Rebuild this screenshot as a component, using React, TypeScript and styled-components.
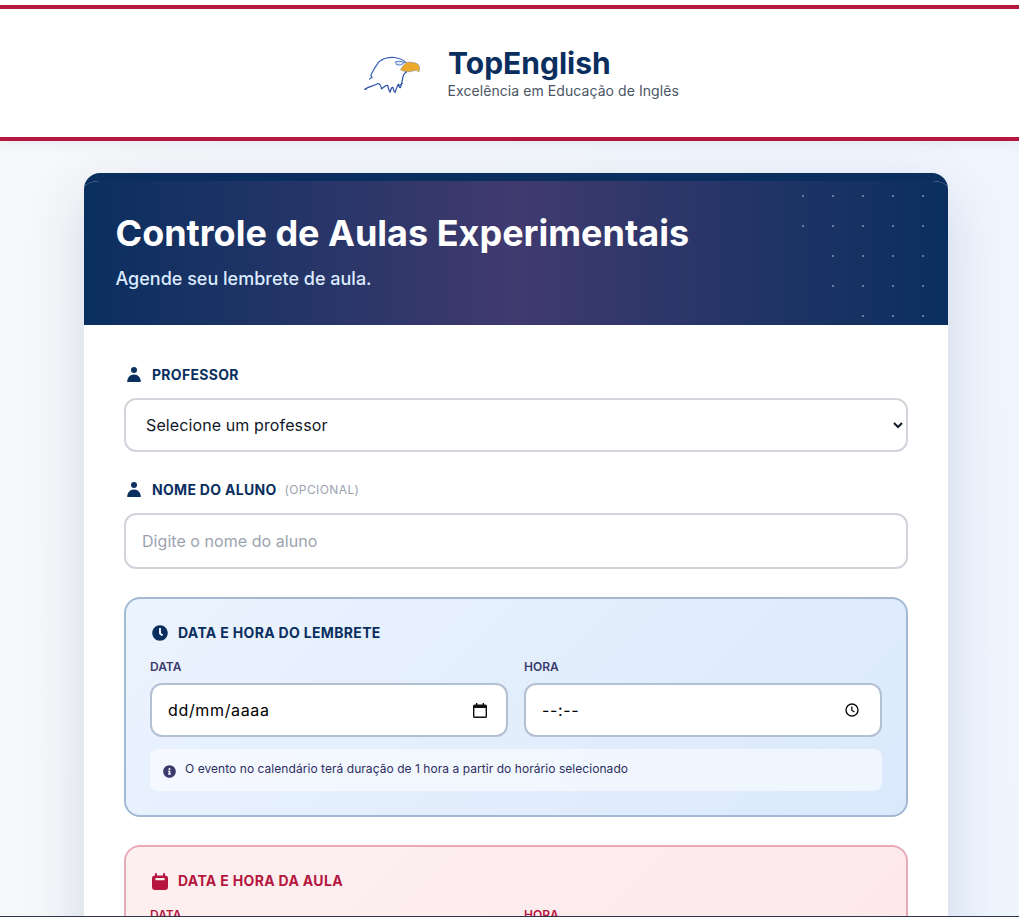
import React from 'react';
import styled, { createGlobalStyle } from 'styled-components';
import { FaClock, FaInfoCircle } from 'react-icons/fa';

const navy = '#0a2f5f';
const crimson = '#b5173f';

const Global = createGlobalStyle`
  html, body { margin: 0; height: 917px; overflow: hidden; background: #fff; }
  * { box-sizing: border-box; }
  body { font-family: Inter, "Liberation Sans", sans-serif; }
`;

const Page = styled.div`
  height: 917px;
  overflow: hidden;
  display: flex;
  flex-direction: column;
  background: linear-gradient(100deg, #f7f8fa 0%, #eff5ff 100%);
`;

const TopBar = styled.header`
  position: relative;
  z-index: 1;
  flex: none;
  background: #fff;
  padding-top: 5px;
  box-shadow: 0 4px 10px rgba(10, 47, 95, 0.06);
`;

const Brand = styled.div`
  height: 136px;
  border-top: 4px solid ${crimson};
  border-bottom: 4px solid ${crimson};
  display: flex;
  align-items: center;
  justify-content: center;
  gap: 16px;
`;

const LogoBox = styled.div`
  width: 92px;
  display: flex;
  justify-content: flex-start;
  padding: 4px 0 0 20px;
`;

const BrandText = styled.div`
  display: flex;
  flex-direction: column;
  padding-bottom: 1px;
`;

const BrandName = styled.div`
  font-size: 30px;
  line-height: 36px;
  font-weight: 700;
  color: ${navy};
`;

const BrandTag = styled.div`
  margin: 1px 0 0 -0.5px;
  font-size: 14px;
  line-height: 18px;
  letter-spacing: 0.07px;
  color: #4b5563;
`;

const Main = styled.main`
  padding: 32px 71px 32px 84px;
`;

const Card = styled.section`
  width: 864px;
  border-top: 8px solid ${navy};
  border-radius: 16px;
  overflow: hidden;
  background: #fff;
`;

const CardShadow = styled.div`
  width: 864px;
  border-radius: 16px;
  box-shadow: 0 20px 60px rgba(10, 47, 95, 0.15);
`;

const Hero = styled.div`
  position: relative;
  height: 144px;
  padding: 32px 32px 32px 31.5px;
  background: linear-gradient(90deg, ${navy} 0%, #403a6f 50%, ${navy} 100%);
  &::after {
    content: '';
    position: absolute;
    right: 0;
    top: 0;
    width: 150px;
    height: 144px;
    background-image: radial-gradient(circle, rgba(255, 255, 255, 0.36) 1px, transparent 1.2px);
    background-size: 30px 30px;
    background-position: -10px 0;
    clip-path: polygon(0 0, 100% 0, 100% 100%, 50px 100%, 0 45px);
  }
`;

const Title = styled.h1`
  margin: 0;
  font-size: 36px;
  line-height: 40px;
  font-weight: 700;
  color: #fff;
`;

const Subtitle = styled.p`
  margin: 12px 0 0;
  font-size: 18px;
  line-height: 28px;
  font-weight: 500;
  color: #dbeafe;
`;

const Form = styled.form`
  padding: 40px;
  display: flex;
  flex-direction: column;
`;

const Group = styled.div`
  margin-bottom: 28px;
`;

const Label = styled.label`
  height: 20px;
  margin-bottom: 13px;
  display: flex;
  align-items: flex-start;
  gap: 11px;
  font-size: 14px;
  line-height: 19px;
  font-weight: 700;
  letter-spacing: 0.3px;
  color: ${navy};
  svg { margin: 2px 0 0 3px; flex: none; }
`;

const Optional = styled.span`
  font-size: 12px;
  font-weight: 400;
  letter-spacing: 0.4px;
  color: #9ca3af;
  margin-left: -3px;
`;

const Select = styled.select`
  width: 100%;
  height: 54px;
  padding: 0 16px;
  border: 2px solid #d1d5db;
  border-radius: 12px;
  background: #fff;
  color: #111827;
  font: 400 16px Inter, sans-serif;
  letter-spacing: 0.11px;
  outline: none;
`;

const TextInput = styled.input`
  width: 100%;
  height: 56px;
  padding: 0 16px;
  border: 2px solid #d1d5db;
  border-radius: 12px;
  background: #fff;
  font: 400 16px Inter, sans-serif;
  letter-spacing: 0.05px;
  outline: none;
  &::placeholder { color: #9ca3af; }
`;

const Panel = styled.div<{ $tone: 'blue' | 'red' }>`
  margin-bottom: 28px;
  padding: 24px;
  border: 2px solid ${p => (p.$tone === 'blue' ? '#a3b9d3' : '#e8aab9')};
  border-radius: 16px;
  background: ${p =>
    p.$tone === 'blue'
      ? 'linear-gradient(135deg, #ebf3fe 0%, #dbe9fc 100%)'
      : 'linear-gradient(135deg, #fdf0f1 0%, #fde8ea 100%)'};
`;

const PanelTitle = styled.div<{ $tone: 'blue' | 'red' }>`
  height: 20px;
  margin-bottom: 16px;
  display: flex;
  align-items: flex-start;
  gap: 10px;
  font-size: 14px;
  line-height: 19px;
  font-weight: 700;
  letter-spacing: 0.33px;
  color: ${p => (p.$tone === 'blue' ? navy : crimson)};
  svg { margin: 2px 0 0 2px; flex: none; }
`;

const Fields = styled.div`
  display: grid;
  grid-template-columns: 1fr 1fr;
  gap: 16px;
`;

const FieldLabel = styled.div<{ $tone: 'blue' | 'red' }>`
  height: 15px;
  margin-bottom: 9px;
  font-size: 12px;
  line-height: 15px;
  font-weight: 600;
  color: ${p => (p.$tone === 'blue' ? '#3a3a6c' : crimson)};
`;

const FakeInput = styled.div`
  height: 54px;
  padding: 0 16px;
  border: 2px solid #b3c0d2;
  border-radius: 12px;
  background: #fff;
  display: flex;
  align-items: center;
  justify-content: space-between;
  font-size: 16px;
  font-weight: 400;
  letter-spacing: 0.65px;
  color: #000;
`;

const GlyphSlot = styled.span<{ $inset: number }>`
  display: flex;
  margin-right: ${p => p.$inset}px;
`;

const Note = styled.div`
  margin-top: 12px;
  height: 42px;
  padding: 0 13px;
  border-radius: 8px;
  background: rgba(255, 255, 255, 0.55);
  display: flex;
  align-items: center;
  gap: 9px;
  font-size: 12px;
  line-height: 16px;
  letter-spacing: 0.05px;
  color: #2d2d5f;
  svg { margin-top: 3px; flex: none; color: #3a3a6c; }
`;

const NoteText = styled.span`
  margin-top: -3px;
`;

const BottomEdge = styled.div`
  position: fixed;
  z-index: 2;
  left: 0;
  right: 0;
  bottom: 0;
  height: 1px;
  background: #2d3748;
`;

const PersonIcon = () => (
  <svg width="14" height="15" viewBox="0 0 14 15" fill="currentColor" aria-hidden="true">
    <circle cx="7" cy="3" r="3" />
    <path d="M0.2 15C0.2 10.6 2.8 7.4 7 7.4C11.2 7.4 13.8 10.6 13.8 15Z" />
  </svg>
);

const CalendarIcon = () => (
  <svg width="16" height="17" viewBox="0 0 16 17" fill="currentColor" aria-hidden="true">
    <path
      fillRule="evenodd"
      d="M3 0.2h2v2.3h6V0.2h2v2.3A3 3 0 0 1 16 5.5v8.5a3 3 0 0 1-3 3H3a3 3 0 0 1-3-3V5.5A3 3 0 0 1 3 2.5z M3.4 5v2.2h9.2V5z"
    />
  </svg>
);

const Eagle = () => (
  <svg width="64" height="44" viewBox="60 160 190 130" fill="none" aria-hidden="true">
    <path
      d="M88 237 L96 232 L92 226 L102 207 L116 186 C128 176 145 172 162 173 C178 175 190 181 197 189"
      stroke="#3a62b4"
      strokeWidth="3.6"
      strokeLinecap="round"
      strokeLinejoin="round"
    />
    <path
      d="M165 186 C172 183 184 185 191 188 C186 195 176 197 168 193 Z"
      stroke="#5a7fc2"
      strokeWidth="3"
      fill="#dfe8f6"
    />
    <path
      d="M180 209 C186 200 192 190 200 187 C212 186 226 188 233 194 C238 200 238 210 235 216 C230 211 222 211 214 214 C204 217 190 216 180 209 Z"
      fill="#eda92c"
      stroke="#7d8fa8"
      strokeWidth="1.6"
    />
    <path
      d="M76 266 C90 258 100 258 110 252 C116 248 122 254 124 266 C130 262 136 254 142 256 C144 264 146 272 149 276 C152 268 154 260 158 262 C160 270 161 276 164 277 C168 268 170 256 174 252 C176 258 177 264 180 262 C184 252 186 238 188 228 C190 222 194 218 198 216"
      stroke="#2a50a6"
      strokeWidth="3.6"
      strokeLinecap="round"
      strokeLinejoin="round"
    />
    <path d="M74 268 L80 266 M172 258 L186 250" stroke="#2a50a6" strokeWidth="3" strokeLinecap="round" />
  </svg>
);

const CalendarGlyph = () => (
  <svg width="14" height="15" viewBox="0 0 14 15" aria-hidden="true">
    <path
      d="M3 0h1.4v1.5h5.2V0H11v1.5h1.5A1.5 1.5 0 0 1 14 3v10.5a1.5 1.5 0 0 1-1.5 1.5h-11A1.5 1.5 0 0 1 0 13.5V3A1.5 1.5 0 0 1 1.5 1.5H3z M1.4 5v8.6h11.2V5z"
      fill="#111"
      fillRule="evenodd"
    />
  </svg>
);

const ClockGlyph = () => (
  <svg width="14" height="14" viewBox="0 0 14 14" fill="none" aria-hidden="true">
    <circle cx="7" cy="7" r="6" stroke="#111" strokeWidth="1.4" />
    <path d="M6.8 3.6V7.2L9.4 9" stroke="#111" strokeWidth="1.3" />
  </svg>
);

const DateTimeFields = ({ tone }: { tone: 'blue' | 'red' }) => (
  <Fields>
    <div>
      <FieldLabel $tone={tone}>DATA</FieldLabel>
      <FakeInput>
        dd/mm/aaaa
        <GlyphSlot $inset={3}>
          <CalendarGlyph />
        </GlyphSlot>
      </FakeInput>
    </div>
    <div>
      <FieldLabel $tone={tone}>HORA</FieldLabel>
      <FakeInput>
        --:--
        <GlyphSlot $inset={5}>
          <ClockGlyph />
        </GlyphSlot>
      </FakeInput>
    </div>
  </Fields>
);

export default function App() {
  return (
    <>
      <Global />
      <Page>
        <TopBar>
          <Brand>
            <LogoBox>
              <Eagle />
            </LogoBox>
            <BrandText>
              <BrandName>TopEnglish</BrandName>
              <BrandTag>Excelência em Educação de Inglês</BrandTag>
            </BrandText>
          </Brand>
        </TopBar>
        <Main>
          <CardShadow>
            <Card>
              <Hero>
                <Title>Controle de Aulas Experimentais</Title>
                <Subtitle>Agende seu lembrete de aula.</Subtitle>
              </Hero>
              <Form>
                <Group>
                  <Label>
                    <PersonIcon />
                    PROFESSOR
                  </Label>
                  <Select defaultValue="">
                    <option value="">Selecione um professor</option>
                  </Select>
                </Group>
                <Group>
                  <Label>
                    <PersonIcon />
                    NOME DO ALUNO
                    <Optional>(OPCIONAL)</Optional>
                  </Label>
                  <TextInput placeholder="Digite o nome do aluno" />
                </Group>
                <Panel $tone="blue">
                  <PanelTitle $tone="blue">
                    <FaClock size={16} />
                    DATA E HORA DO LEMBRETE
                  </PanelTitle>
                  <DateTimeFields tone="blue" />
                  <Note>
                    <FaInfoCircle size={13} />
                    <NoteText>O evento no calendário terá duração de 1 hora a partir do horário selecionado</NoteText>
                  </Note>
                </Panel>
                <Panel $tone="red">
                  <PanelTitle $tone="red">
                    <CalendarIcon />
                    DATA E HORA DA AULA
                  </PanelTitle>
                  <DateTimeFields tone="red" />
                </Panel>
              </Form>
            </Card>
          </CardShadow>
        </Main>
        <BottomEdge />
      </Page>
    </>
  );
}
